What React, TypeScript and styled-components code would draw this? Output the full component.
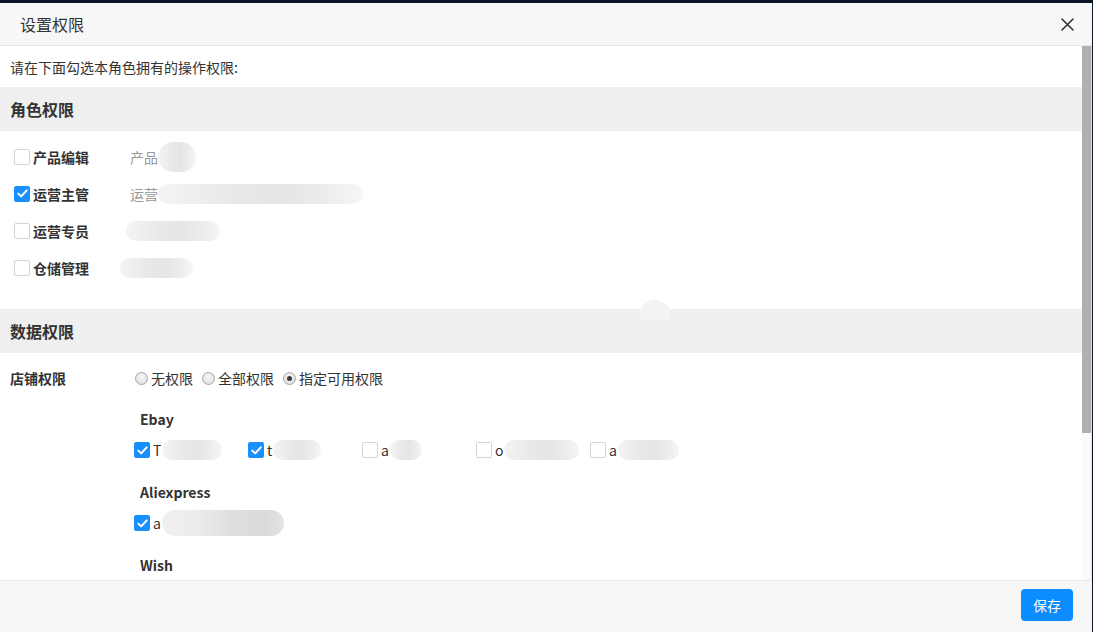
import React from "react";
import styled, { createGlobalStyle } from "styled-components";

const Global = createGlobalStyle`
  html, body { margin: 0; padding: 0; background: #0a1526; }
  body { font-family: "Noto Sans CJK SC", "Noto Sans", "Liberation Sans", sans-serif; color: #333; }
  * { box-sizing: border-box; }
`;

const Dialog = styled.div`
  width: 1092px;
  height: 629px;
  margin-top: 3px;
  background: #fff;
  display: flex;
  flex-direction: column;
  overflow: hidden;
`;

const Header = styled.div`
  height: 43px;
  flex: none;
  background: #f7f7f7;
  border-bottom: 1px solid #e6e6e6;
  display: flex;
  align-items: center;
  justify-content: space-between;
  padding: 0 16px 0 20px;
`;

const Title = styled.div`
  font-size: 16px;
  line-height: 22px;
  color: #333;
`;

const CloseBtn = styled.button`
  width: 18px;
  height: 18px;
  padding: 0;
  border: 0;
  background: transparent;
  display: flex;
  align-items: center;
  justify-content: center;
  cursor: pointer;
`;

const Body = styled.div`
  flex: 1;
  min-height: 0;
  display: flex;
  overflow: hidden;
`;

const Content = styled.div`
  flex: 1;
  min-width: 0;
  height: 737px;
  position: relative;
`;

const ScrollTrack = styled.div`
  width: 10px;
  flex: none;
  background: #fafafa;
  border-right: 1px solid #e4e4e4;
`;

const ScrollThumb = styled.div`
  height: 387px;
  background: #b0b0b0;
`;

const Intro = styled.div`
  font-size: 14px;
  line-height: 20px;
  padding: 11px 10px 10px;
`;

const SectionHead = styled.div`
  height: 44px;
  background: #efefef;
  display: flex;
  align-items: center;
  padding-left: 10px;
  font-size: 16px;
  font-weight: 700;
`;

const RoleList = styled.div`
  padding: 7px 0 23px;
`;

const RoleRow = styled.div`
  height: 37px;
  display: flex;
  align-items: center;
  padding-left: 14px;
`;

const Box = styled.span<{ $on?: boolean }>`
  width: 16px;
  height: 16px;
  flex: none;
  border-radius: 2px;
  border: 1px solid ${(p) => (p.$on ? "#1890ff" : "#d4d4d4")};
  background: ${(p) => (p.$on ? "#1890ff" : "#fff")};
  display: inline-flex;
  align-items: center;
  justify-content: center;
`;

const RoleName = styled.span`
  font-size: 14px;
  font-weight: 700;
  line-height: 20px;
  margin-left: 3px;
  width: 97px;
  flex: none;
`;

const Desc = styled.span<{ $shift?: number }>`
  font-size: 14px;
  color: #999;
  line-height: 20px;
  display: inline-flex;
  align-items: center;
  margin-left: ${(p) => p.$shift ?? 0}px;
`;

const Blur = styled.span<{ $w: number; $h?: number; $dark?: boolean }>`
  display: inline-block;
  width: ${(p) => p.$w}px;
  height: ${(p) => p.$h ?? 20}px;
  border-radius: ${(p) => (p.$h ?? 20) / 2}px;
  background: ${(p) =>
    p.$dark
      ? "linear-gradient(90deg, #f0f0f0 0%, #ebebeb 30%, #dedede 60%, #dadada 85%, #e4e4e4 100%)"
      : "linear-gradient(90deg, #f4f4f4 0%, #e9e9e9 35%, #e5e5e5 60%, #eeeeee 85%, #f6f6f6 100%)"};
`;

const DataRow = styled.div`
  display: grid;
  grid-template-columns: 125px 1fr;
  padding: 15px 0 0 10px;
`;

const FieldLabel = styled.div`
  font-size: 14px;
  font-weight: 700;
  line-height: 20px;
`;

const Radios = styled.div`
  display: flex;
  align-items: center;
  gap: 9px;
  height: 20px;
`;

const RadioItem = styled.label`
  display: inline-flex;
  align-items: center;
  font-size: 14px;
  line-height: 20px;
  gap: 3px;
`;

const RadioDot = styled.span<{ $on?: boolean }>`
  width: 13px;
  height: 13px;
  border-radius: 50%;
  border: 1px solid #a5a5a5;
  background: radial-gradient(circle at 50% 35%, #f6f6f6 0%, #dcdcdc 100%);
  display: inline-flex;
  align-items: center;
  justify-content: center;
  &::after {
    content: "";
    width: 5px;
    height: 5px;
    border-radius: 50%;
    background: ${(p) => (p.$on ? "#3a3a3a" : "transparent")};
  }
`;

const Platforms = styled.div`
  grid-column: 2;
  padding-top: 21px;
  margin-left: -1px;
`;

const PlatformTitle = styled.div<{ $gap?: number }>`
  font-size: 14px;
  font-weight: 700;
  line-height: 20px;
  padding-left: 6px;
  margin-top: ${(p) => p.$gap ?? 0}px;
`;

const StoreRow = styled.div`
  display: flex;
  margin-top: 11px;
  height: 20px;
`;

const Store = styled.label<{ $w?: number }>`
  width: ${(p) => p.$w ?? 114}px;
  display: inline-flex;
  align-items: center;
  font-size: 14px;
  line-height: 20px;
  color: #333;
`;

const StoreInitial = styled.span`
  margin-left: 3px;
  margin-right: 1px;
`;

const Blob = styled.span`
  position: absolute;
  left: 639px;
  top: 254px;
  width: 32px;
  height: 21px;
  border-radius: 16px 16px 0 0;
  background: #f3f3f3;
`;

const Footer = styled.div`
  height: 52px;
  flex: none;
  background: #f7f7f7;
  border-top: 1px solid #e8e8e8;
  display: flex;
  align-items: flex-start;
  justify-content: flex-end;
  padding: 8px 19px 0 0;
`;

const SaveBtn = styled.button`
  width: 52px;
  height: 32px;
  border: 0;
  border-radius: 4px;
  background: #0b8cff;
  color: #fff;
  font-family: inherit;
  font-size: 14px;
  cursor: pointer;
`;

const Check = () => (
  <svg width="11" height="9" viewBox="0 0 11 9">
    <path d="M1.3 4.6 L4.2 7.4 L9.7 1.4" fill="none" stroke="#fff" strokeWidth="2" strokeLinecap="round" strokeLinejoin="round" />
  </svg>
);

const CB = ({ on }: { on?: boolean }) => <Box $on={on}>{on && <Check />}</Box>;

const roles = [
  { name: "产品编辑", on: false, text: "产品", blur: 38, shift: 0, h: 30 },
  { name: "运营主管", on: true, text: "运营", blur: 205, shift: 0, h: 20 },
  { name: "运营专员", on: false, text: "", blur: 94, shift: -4, h: 20 },
  { name: "仓储管理", on: false, text: "", blur: 73, shift: -10, h: 20 },
];

const ebay = [
  { on: true, c: "T", w: 60 },
  { on: true, c: "t", w: 48 },
  { on: false, c: "a", w: 32 },
  { on: false, c: "o", w: 75 },
  { on: false, c: "a", w: 61 },
];

export default function App() {
  return (
    <>
      <Global />
      <Dialog>
        <Header>
          <Title>设置权限</Title>
          <CloseBtn aria-label="close">
            <svg width="13" height="13" viewBox="0 0 13 13">
              <path d="M1 1 L12 12 M12 1 L1 12" stroke="#333" strokeWidth="1.6" strokeLinecap="round" />
            </svg>
          </CloseBtn>
        </Header>
        <Body>
          <Content>
            <Intro>请在下面勾选本角色拥有的操作权限:</Intro>
            <SectionHead>角色权限</SectionHead>
            <RoleList>
              {roles.map((r) => (
                <RoleRow key={r.name}>
                  <CB on={r.on} />
                  <RoleName>{r.name}</RoleName>
                  <Desc $shift={r.shift}>
                    {r.text}
                    <Blur $w={r.blur} $h={r.h} />
                  </Desc>
                </RoleRow>
              ))}
            </RoleList>
            <SectionHead>数据权限</SectionHead>
            <DataRow>
              <FieldLabel>店铺权限</FieldLabel>
              <Radios>
                <RadioItem><RadioDot />无权限</RadioItem>
                <RadioItem><RadioDot />全部权限</RadioItem>
                <RadioItem><RadioDot $on />指定可用权限</RadioItem>
              </Radios>
              <Platforms>
                <PlatformTitle>Ebay</PlatformTitle>
                <StoreRow>
                  {ebay.map((s, i) => (
                    <Store key={i}>
                      <CB on={s.on} />
                      <StoreInitial>{s.c}</StoreInitial>
                      <Blur $w={s.w} />
                    </Store>
                  ))}
                </StoreRow>
                <PlatformTitle $gap={22}>Aliexpress</PlatformTitle>
                <StoreRow>
                  <Store $w={200}>
                    <CB on />
                    <StoreInitial>a</StoreInitial>
                    <Blur $w={122} $h={26} $dark />
                  </Store>
                </StoreRow>
                <PlatformTitle $gap={22}>Wish</PlatformTitle>
              </Platforms>
            </DataRow>
            <Blob />
          </Content>
          <ScrollTrack>
            <ScrollThumb />
          </ScrollTrack>
        </Body>
        <Footer>
          <SaveBtn>保存</SaveBtn>
        </Footer>
      </Dialog>
    </>
  );
}
